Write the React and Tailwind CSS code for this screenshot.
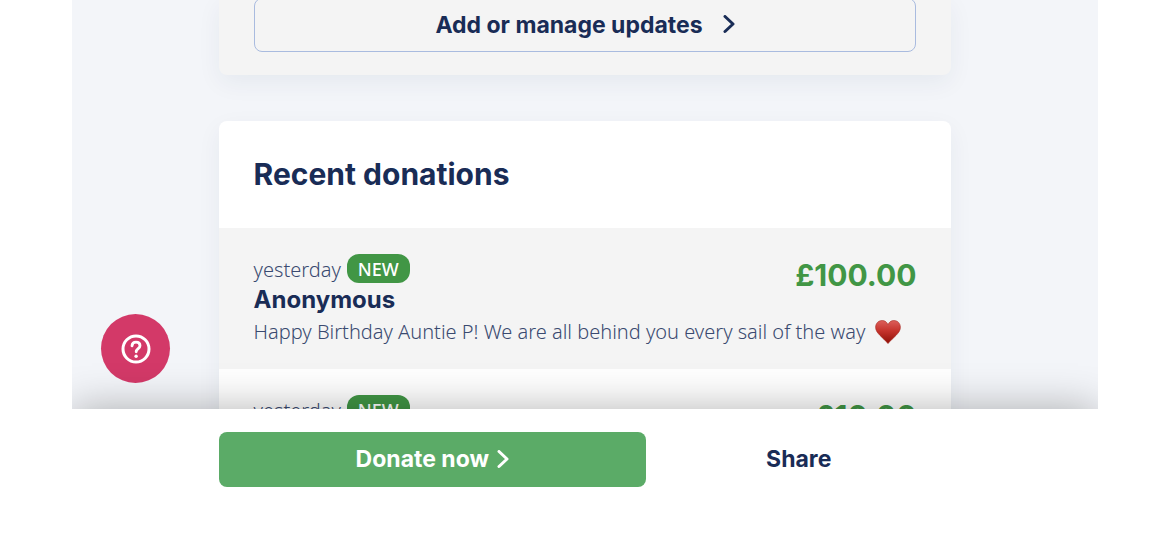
import React from "react";

const donations = [
  {
    id: 1,
    when: "yesterday",
    isNew: true,
    name: "Anonymous",
    message: "Happy Birthday Auntie P! We are all behind you every sail of the way",
    heart: true,
    amount: "£100.00",
  },
  { id: 2, when: "yesterday", isNew: true, amount: "£10.00" },
];

function Chevron() {
  return (
    <svg
      className="h-5 w-3"
      viewBox="0 0 12 20"
      fill="none"
      stroke="currentColor"
      strokeWidth="3"
      strokeLinecap="round"
      strokeLinejoin="round"
      aria-hidden="true"
    >
      <path d="M2 1.5 L10 9 L2 16.5" />
    </svg>
  );
}

function Heart() {
  return (
    <svg className="h-6 w-[26px] shrink-0" viewBox="0 0 26 24" role="img" aria-label="heart">
      <defs>
        <linearGradient id="heartFill" x1="0" y1="0" x2="0" y2="1">
          <stop offset="0" stopColor="#dc5f5a" />
          <stop offset="0.45" stopColor="#c5332c" />
          <stop offset="1" stopColor="#8e0f06" />
        </linearGradient>
      </defs>
      <path
        d="M13 4.8 C12 2 9.8 0.5 7.2 0.5 C3.4 0.5 0.6 3.3 0.6 7.4 C0.6 13.2 8.2 17.6 13 23.6 C17.8 17.6 25.4 13.2 25.4 7.4 C25.4 3.3 22.6 0.5 18.8 0.5 C16.2 0.5 14 2 13 4.8 Z"
        fill="url(#heartFill)"
        stroke="#a82a22"
        strokeWidth="0.6"
      />
    </svg>
  );
}

function Donation({ donation }) {
  return (
    <li className="flex items-start justify-between px-[35px] pt-[26px] pb-[22px] odd:bg-[#f4f4f4] even:bg-white">
      <div>
        <div className="flex items-center gap-1.5">
          <span className="pt-0.5 leading-[27px]">{donation.when}</span>
          {donation.isNew && (
            <span className="rounded-xl bg-[#419645] px-[11px] pt-px text-lg leading-7 font-medium text-white">NEW</span>
          )}
        </div>
        {donation.name && (
          <p className="font-['Inter',sans-serif] text-2xl leading-[34px] font-bold text-[#192c56]">{donation.name}</p>
        )}
        {donation.message && (
          <p className="flex items-center gap-2.5 leading-[30px] whitespace-nowrap">
            {donation.message}
            {donation.heart && <Heart />}
          </p>
        )}
      </div>
      <div className="-ml-40 pt-1 font-['Inter',sans-serif] text-3xl leading-[34px] font-bold text-[#419645]">
        {donation.amount}
      </div>
    </li>
  );
}

export default function App() {
  return (
    <div className="mx-[72px] flex h-screen flex-col overflow-hidden bg-white font-['Noto_Sans',sans-serif] text-xl font-light text-[#3a4a70]">
      <main className="relative min-h-0 flex-1 overflow-hidden bg-[#f3f5f9]">
        <div className="mx-auto w-5/7 space-y-[46px]">
          <section className="rounded-b-lg bg-[#f4f4f4] px-[35px] pb-[23px] shadow-[0_8px_24px_rgba(25,44,86,0.06)]">
            <button
              type="button"
              className="-mt-0.5 flex h-[54px] w-full items-center justify-center gap-5 rounded-lg border border-[#a9bbdf] font-['Inter',sans-serif] text-[23px] font-bold text-[#192c56]"
            >
              Add or manage updates
              <Chevron />
            </button>
          </section>

          <section className="overflow-hidden rounded-lg bg-white shadow-[0_8px_24px_rgba(25,44,86,0.06)]">
            <h2 className="px-[35px] py-8 font-['Inter',sans-serif] text-3xl leading-[43px] font-bold text-[#192c56]">
              Recent donations
            </h2>
            <ul>
              {donations.map((d) => (
                <Donation key={d.id} donation={d} />
              ))}
            </ul>
          </section>
        </div>

        {/* Floating help button */}
        <button
          type="button"
          aria-label="Help"
          className="absolute bottom-[26px] left-[29px] flex size-[69px] items-center justify-center rounded-full bg-[#d33968] text-white"
        >
          <svg className="size-[30px]" viewBox="0 0 30 30" fill="none" stroke="currentColor" strokeLinecap="round">
            <circle cx="15" cy="15" r="13" strokeWidth="3" />
            <path d="M11 11.8 C11.2 9.4 12.8 8.2 15 8.2 C17.4 8.2 19 9.7 19 11.8 C19 14.6 15.2 14.7 15.2 17.8" strokeWidth="2.8" />
            <circle cx="15.1" cy="22.2" r="1.7" fill="currentColor" stroke="none" />
          </svg>
        </button>
      </main>

      <footer className="relative bg-white pt-[23px] pb-[53px] shadow-[0_0_40px_rgba(0,0,0,0.3)]">
        <div className="mx-auto flex w-5/7 font-['Inter',sans-serif] text-[23px] font-bold">
          <button
            type="button"
            className="flex h-[55px] w-7/12 items-center justify-center gap-2 rounded-lg bg-[#5bab67] text-white"
          >
            Donate now
            <Chevron />
          </button>
          <button type="button" className="h-[55px] flex-1 text-[#192c56]">
            Share
          </button>
        </div>
      </footer>
    </div>
  );
}
